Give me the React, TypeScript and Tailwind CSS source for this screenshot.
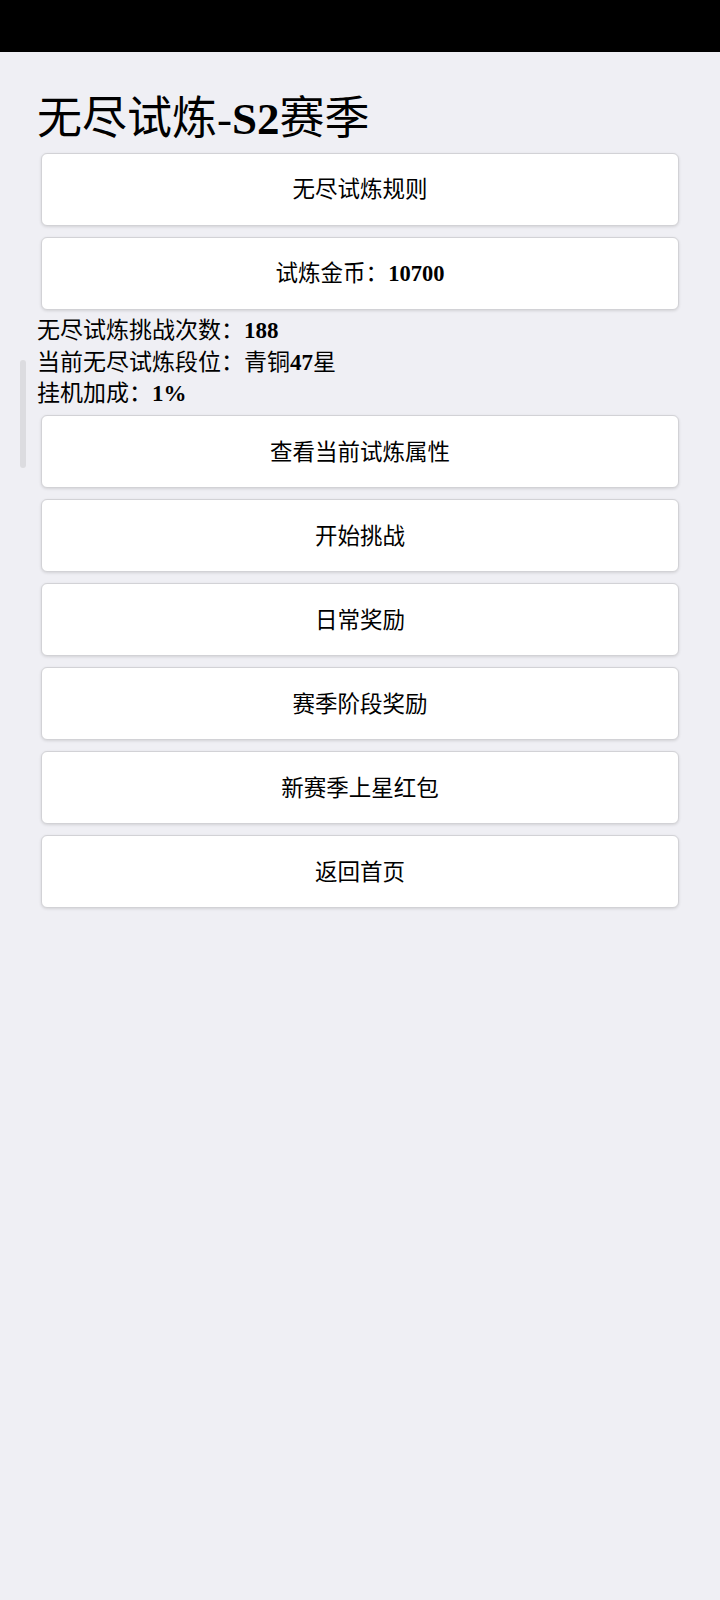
import React from "react";

const font = {
  fontFamily: '"Liberation Serif", "Noto Sans CJK SC", serif',
};

const buttons = ["查看当前试炼属性", "开始挑战", "日常奖励", "赛季阶段奖励", "新赛季上星红包", "返回首页"];

function Card({ children }: { children: React.ReactNode }) {
  return (
    <div className="mx-[4px] my-[5.5px] flex h-[73px] items-center justify-center rounded-[6px] border border-[#d2d2d6] bg-white pt-[2px] text-[22.5px] text-black shadow-[0_1px_3px_rgba(0,0,0,0.12)]">
      {children}
    </div>
  );
}

export default function App() {
  return (
    <div className="relative min-h-[1600px] bg-[#efeff4]" style={font}>
      <div className="h-[52px] bg-black" />

      {/* scroll indicator */}
      <div className="absolute left-[20px] top-[360px] h-[108px] w-[6px] rounded-full bg-[#dcdce0]" />

      <div className="flex flex-col px-[37px] text-black">
        <h1 className="mt-[40px] mb-[1px] text-[45px] leading-[54px] font-normal">
          无尽试炼-<b className="font-bold">S2</b>赛季
        </h1>

        <Card>无尽试炼规则</Card>
        <Card>
          试炼金币：<b className="font-bold">10700</b>
        </Card>

        <div className="text-[23px] leading-[31.5px]">
          <div>
            无尽试炼挑战次数：<b className="font-bold">188</b>
          </div>
          <div>
            当前无尽试炼段位：青铜<b className="font-bold">47</b>星
          </div>
          <div>
            挂机加成：<b className="font-bold">1%</b>
          </div>
        </div>

        {buttons.map((b) => (
          <Card key={b}>{b}</Card>
        ))}
      </div>
    </div>
  );
}
